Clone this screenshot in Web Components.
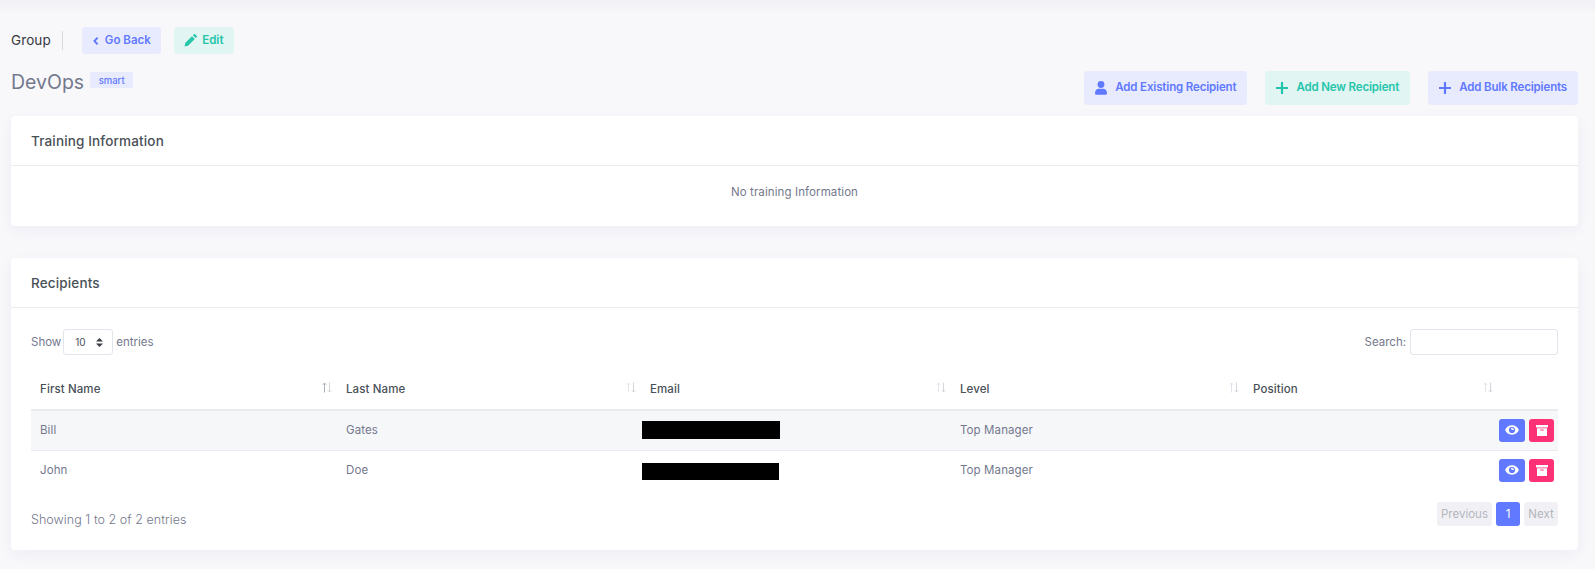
<!DOCTYPE html>
<html lang="en"><head><meta charset="utf-8"><title>Group</title>
<style>
html,body{margin:0;padding:0;height:100%;background:#f8f8fb}
body{font-family:Inter,"Liberation Sans",sans-serif;color:#495057;overflow:hidden}
</style></head><body>
<group-page></group-page>
<script>
const ICONS={
 back:'<svg width="8" height="10" viewBox="0 0 8 10"><path d="M5.6 1.6 2.4 5l3.2 3.4" fill="none" stroke="currentColor" stroke-width="1.9"/></svg>',
 edit:'<svg width="13" height="13" viewBox="0 0 13 13"><path fill="currentColor" d="M0.6 12.4 1.2 9 8 2.2l2.8 2.8L4 11.8zM8.9 1.3 10 .3a.9.9 0 0 1 1.2 0l1.5 1.5a.9.9 0 0 1 0 1.2l-1 1.1z"/></svg>',
 user:'<svg width="12" height="14" viewBox="0 0 12 14"><circle cx="6" cy="3.5" r="3.4" fill="currentColor"/><path fill="currentColor" d="M0 12.2C0 9.4 1.8 7.7 3.6 7.7h4.8c1.8 0 3.6 1.7 3.6 4.5 0 1-.6 1.6-1.5 1.6H1.5C.6 13.8 0 13.2 0 12.2z"/></svg>',
 plus:'<svg width="12" height="12" viewBox="0 0 12 12"><path d="M6 0v12M0 6h12" fill="none" stroke="currentColor" stroke-width="2.2"/></svg>',
 eye:'<svg width="14" height="10" viewBox="0 0 14 10"><path fill="#fff" fill-rule="evenodd" d="M7 .3C3.9.3 1.3 2.2.1 5c1.2 2.8 3.8 4.7 6.9 4.7s5.7-1.900 6.900-4.700C12.700 2.200 10.100.3 7 .3zM7 8.100A3.100 3.100 0 1 1 7 1.900a3.100 3.100 0 0 1 0 6.200z"/><path fill="#fff" d="M7 3.100a1.900 1.900 0 0 1 1.900 1.900L7 5 5.700 3.600A1.900 1.900 0 0 1 7 3.100z"/></svg>',
 box:'<svg width="12" height="11" viewBox="0 0 12 11"><path fill="#fff" fill-rule="evenodd" d="M0 0h12v2.400H0zM1 3.300h10V11H1zM4.300 4.500v.9h3.400v-.9z"/></svg>'
};
customElements.define('ui-btn',class extends HTMLElement{
 constructor(){super();const s=this.attachShadow({mode:'open'});
 const ic=this.getAttribute('icon');
 s.innerHTML=`<style>
 :host{display:inline-flex;align-items:center;box-sizing:border-box;border-radius:3px;font-weight:600;font-size:var(--fs,11.500px);height:var(--h,27px);padding:var(--pad,0 10px);gap:var(--gap,5px);background:#e8ebfd;color:#6079ff;white-space:nowrap;letter-spacing:var(--ls,0)}
 :host([tone=teal]){background:#e1f5f2;color:#25c5ac}
 svg{display:block}span{display:flex}
 .lbl{display:block;padding-bottom:2px}
 </style><span>${ICONS[ic]||''}</span><span class="lbl"><slot></slot></span>`}
});
customElements.define('ui-card',class extends HTMLElement{
 constructor(){super();const s=this.attachShadow({mode:'open'});
 s.innerHTML=`<style>
 :host{display:block;background:#fff;border-radius:4px;box-shadow:0 4px 14px rgba(40,40,90,.05)}
 header{height:49px;display:flex;align-items:center;padding:0 20px;border-bottom:1px solid #eaebef;font-size:13.500px;font-weight:500;color:#495057;letter-spacing:.15px}
 </style><header>${this.getAttribute('heading')}</header><slot></slot>`}
});
customElements.define('sort-icon',class extends HTMLElement{
 constructor(){super();const s=this.attachShadow({mode:'open'});
 const on=this.hasAttribute('active');
 s.innerHTML=`<style>:host{position:absolute;right:5px;top:13px;display:block;width:10px;height:11px}svg{display:block}</style>
 <svg width="10" height="11" viewBox="0 0 10 11" fill="none" stroke-width="1"><path d="M2.500 10.500V1M.8 2.800 2.500 1l1.700 1.800" stroke="${on?'#a9b0bb':'#e2e4e9'}"/><path d="M7.500.5V10M5.800 8.200 7.500 10l1.700-1.800" stroke="#d3d5da"/></svg>`}
});
customElements.define('data-table',class extends HTMLElement{
 constructor(){super();const s=this.attachShadow({mode:'open'});
 const rows=[['Bill','Gates',138,18,'Top Manager',1,0],['John','Doe',137,17,'Top Manager',0,2]];
 const heads=['First Name','Last Name','Email','Level','Position'];
 s.innerHTML=`<style>
 :host{display:block}
 table{width:100%;table-layout:fixed;border-collapse:collapse;font-size:11.500px}
 th{position:relative;height:41px;padding:0 9px;text-align:left;font-weight:500;color:#495057;border-bottom:2px solid #eaebf0;letter-spacing:.1px;box-sizing:border-box}
 tbody tr{height:40px}
 td{padding:0 9px 1px;color:#74788d;border-bottom:1px solid #eaebf0;letter-spacing:.1px}
 tr:last-child td{border-bottom:0}
 tr.odd td{background:#f6f7f9}
 td.mail{padding:0 0 0 1px}
 td.end{padding:0}
 .redact{display:block;background:#000}
 .acts{display:flex;justify-content:flex-end;gap:4px;padding-right:4px}
 .act{width:26px;height:23px;border-radius:3px;background:#6079ff;display:flex;align-items:center;justify-content:center}
 .act.del{width:25px;background:#fd3276}
 </style><table>
 <colgroup><col style="width:306px"><col style="width:304px"><col style="width:310px"><col style="width:293px"><col style="width:254px"><col></colgroup>
 <thead><tr>${heads.map((h,i)=>`<th>${h}<sort-icon ${i==0?'active':''}></sort-icon></th>`).join('')}<th></th></tr></thead>
 <tbody>${rows.map(r=>`<tr class="${r[5]?'odd':''}"><td>${r[0]}</td><td>${r[1]}</td><td class="mail"><span class="redact" style="width:${r[2]}px;height:${r[3]}px;margin-top:${r[6]}px"></span></td><td>${r[4]}</td><td></td><td class="end"><div class="acts"><div class="act">${ICONS.eye}</div><div class="act del">${ICONS.box}</div></div></td></tr>`).join('')}</tbody></table>`}
});
customElements.define('entries-bar',class extends HTMLElement{
 constructor(){super();const s=this.attachShadow({mode:'open'});
 s.innerHTML=`<style>
 :host{display:flex;justify-content:space-between;align-items:center;height:26px;font-size:11.500px;color:#74788d;letter-spacing:0}
 .l,.r{display:flex;align-items:center}
 .sel{box-sizing:border-box;width:50px;height:26px;margin:0 3px 0 2px;border:1px solid #e3e5ec;border-radius:3px;display:flex;align-items:center;padding-left:11px;gap:10px;font-size:10px;color:#495057}
 .inp{box-sizing:border-box;width:148px;height:26px;margin-left:4px;border:1px solid #e3e5ec;border-radius:3px;background:#fff}
 svg{display:block}
 </style><div class="l">Show<div class="sel">10<svg width="7" height="9" viewBox="0 0 7 9"><path fill="#3b3f46" d="M3.500 0 7 3.600H0zM3.500 9 0 5.400h7z"/></svg></div>entries</div><div class="r">Search:<div class="inp"></div></div>`}
});
customElements.define('pager-bar',class extends HTMLElement{
 constructor(){super();const s=this.attachShadow({mode:'open'});
 s.innerHTML=`<style>
 :host{display:flex;justify-content:space-between;align-items:flex-start;height:24px;font-size:12.500px;color:#74788d;font-weight:300;letter-spacing:.05px}
 .t{padding-top:10px;line-height:16px}
 .p{display:flex;gap:4px;font-size:11.500px;font-weight:400;color:#b3b5bd;letter-spacing:0}
 .b{height:24px;display:flex;align-items:center;justify-content:center;background:#f1f1f5;border-radius:3px;box-sizing:border-box}
 .cur{background:#6079ff;color:#fff;width:24px}
 </style><div class="t">Showing 1 to 2 of 2 entries</div><div class="p"><div class="b" style="width:55px">Previous</div><div class="b cur">1</div><div class="b" style="width:34px">Next</div></div>`}
});
customElements.define('group-page',class extends HTMLElement{
 constructor(){super();const s=this.attachShadow({mode:'open'});
 s.innerHTML=`<style>
 :host{display:block;box-sizing:border-box;height:569px;padding:27px 17px 0 11px;background:linear-gradient(#f0f0f5 0,#f8f8fb 14px)}
 .crumb{display:flex;align-items:center;height:27px}
 .crumb b{font-weight:400;font-size:13.500px;color:#343a40;padding-right:11px;letter-spacing:.1px;line-height:19px;border-right:1px solid #d9dae0;margin-right:19px}
 .crumb ui-btn+ui-btn{margin-left:13px;padding:0 10.500px}
 .row{display:flex;justify-content:space-between;margin:17px 0 11px;height:34px}
 .title{display:flex;align-items:flex-start;gap:6px;height:34px}
 h1{margin:0;font-weight:400;font-size:19.500px;line-height:22px;color:#74788d}
 .badge{margin-top:1px;height:16px;width:43px;display:flex;align-items:center;justify-content:center;background:#e8ebfd;color:#6079ff;border-radius:2px;font-size:9.500px;font-weight:500}
 .acts{display:flex;gap:18px;--h:34px;--fs:11.500px;--ls:-.15px;--gap:8px;--pad:0 11px}
 .note{height:60px;display:flex;align-items:center;justify-content:center;font-size:11.500px;color:#74788d;letter-spacing:.1px;padding-bottom:9px;box-sizing:border-box}
 ui-card+ui-card{margin-top:32px}
 .inner{padding:21px 20px 24px}
 data-table{margin:14px 0 12px}
 </style>
 <div class="crumb"><b>Group</b><ui-btn icon="back">Go Back</ui-btn><ui-btn icon="edit" tone="teal">Edit</ui-btn></div>
 <div class="row"><div class="title"><h1>DevOps</h1><div class="badge">smart</div></div>
 <div class="acts"><ui-btn icon="user">Add Existing Recipient</ui-btn><ui-btn icon="plus" tone="teal">Add New Recipient</ui-btn><ui-btn icon="plus">Add Bulk Recipients</ui-btn></div></div>
 <ui-card heading="Training Information"><div class="note">No training Information</div></ui-card>
 <ui-card heading="Recipients"><div class="inner"><entries-bar></entries-bar><data-table></data-table><pager-bar></pager-bar></div></ui-card>`}
});
</script></body></html>
